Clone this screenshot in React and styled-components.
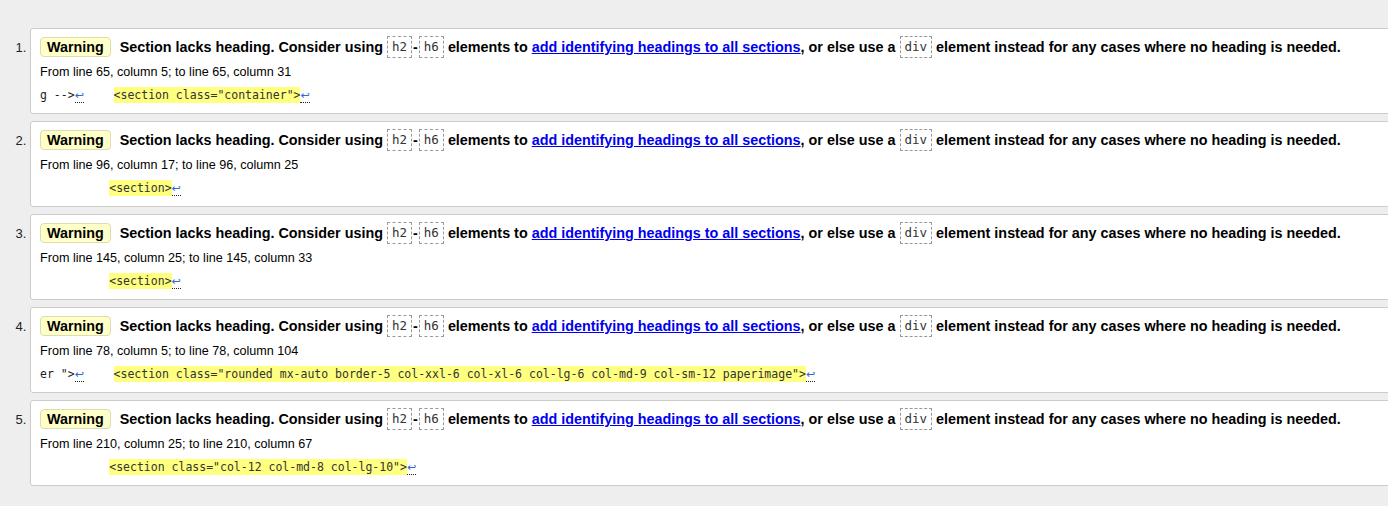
import React from 'react';
import styled, { createGlobalStyle } from 'styled-components';

const GlobalStyle = createGlobalStyle`
  html, body {
    margin: 0;
    padding: 0;
    background: #eeeeee;
    overflow: hidden;
  }
  body {
    font-family: "Liberation Sans", Arial, sans-serif;
    color: #000;
  }
`;

const MessageList = styled.ol`
  margin: 0;
  padding: 28px 0 0 30px;
  width: 1400px;
  font-size: 13px;
`;

const Message = styled.li`
  background: #fff;
  border: 1px solid #cccccc;
  border-radius: 3px;
  margin-bottom: 7px;
  padding: 7px 9px 0 9px;
  height: 77px;
  &::marker {
    font-size: 13px;
    color: #222;
  }
`;

const Title = styled.p`
  margin: 0;
  font-size: 14.37px;
  font-weight: bold;
  line-height: 22px;
  height: 22px;
  white-space: nowrap;
`;

const Badge = styled.strong`
  display: inline-block;
  vertical-align: top;
  margin-top: 1px;
  background: #ffffc8;
  border: 1px solid #dcdcb0;
  border-radius: 4px;
  padding: 0 6px 0 6px;
  margin-right: 5px;
  line-height: 18px;
  font-size: 14.3px;
`;

const Tag = styled.code`
  display: inline-block;
  vertical-align: top;
  font-family: "DejaVu Sans Mono", "Liberation Mono", monospace;
  font-weight: normal;
  font-size: 12.5px;
  color: #333;
  border: 1px dashed #999;
  padding: 0 4px;
  line-height: 20px;
`;

const Dash = styled.span`
  margin: 0 1px;
`;

const Link = styled.a`
  color: #0000ee;
  text-decoration: underline;
`;

const Location = styled.p`
  margin: 6px 0 0 0;
  font-size: 12.6px;
  line-height: 16px;
`;

const Extract = styled.p`
  margin: 7px 0 0 0;
  font-family: "DejaVu Sans Mono", "Liberation Mono", monospace;
  font-size: 11.5px;
  line-height: 17px;
  white-space: pre;
  color: #222;
`;

const Mark = styled.b`
  font-weight: normal;
  background: #ffff80;
  color: #333;
  padding: 1px 0;
  margin-left: ${(p) => p.$shift || 0}px;
`;

const LineFeed = styled.span`
  color: #3366cc;
  font-family: "DejaVu Sans", sans-serif;
  font-size: 11px;
  border-bottom: 1px dotted #222;
`;

const messages = [
  {
    from: 'From line 65, column 5; to line 65, column 31',
    before: 'g -->',
    gap: '    ',
    shift: 2,
    code: '<section class="container">',
  },
  {
    from: 'From line 96, column 17; to line 96, column 25',
    before: null,
    gap: '          ',
    code: '<section>',
  },
  {
    from: 'From line 145, column 25; to line 145, column 33',
    before: null,
    gap: '          ',
    code: '<section>',
  },
  {
    from: 'From line 78, column 5; to line 78, column 104',
    before: 'er ">',
    gap: '    ',
    shift: 2,
    code: '<section class="rounded mx-auto border-5 col-xxl-6 col-xl-6 col-lg-6 col-md-9 col-sm-12 paperimage">',
  },
  {
    from: 'From line 210, column 25; to line 210, column 67',
    before: null,
    gap: '          ',
    code: '<section class="col-12 col-md-8 col-lg-10">',
  },
];

function App() {
  return (
    <>
      <GlobalStyle />
      <MessageList>
        {messages.map((m, i) => (
          <Message key={i}>
            <Title>
              <Badge>Warning</Badge> Section lacks heading. Consider using{' '}
              <Tag>h2</Tag>
              <Dash>-</Dash>
              <Tag>h6</Tag> elements to{' '}
              <Link href="#">add identifying headings to all sections</Link>, or else use a{' '}
              <Tag>div</Tag> element instead for any cases where no heading is needed.
            </Title>
            <Location>{m.from}</Location>
            <Extract>
              {m.before && (
                <>
                  {m.before}
                  <LineFeed>↩</LineFeed>
                </>
              )}
              {m.gap}
              <Mark $shift={m.shift}>{m.code}</Mark>
              <LineFeed>↩</LineFeed>
            </Extract>
          </Message>
        ))}
      </MessageList>
    </>
  );
}

export default App;
